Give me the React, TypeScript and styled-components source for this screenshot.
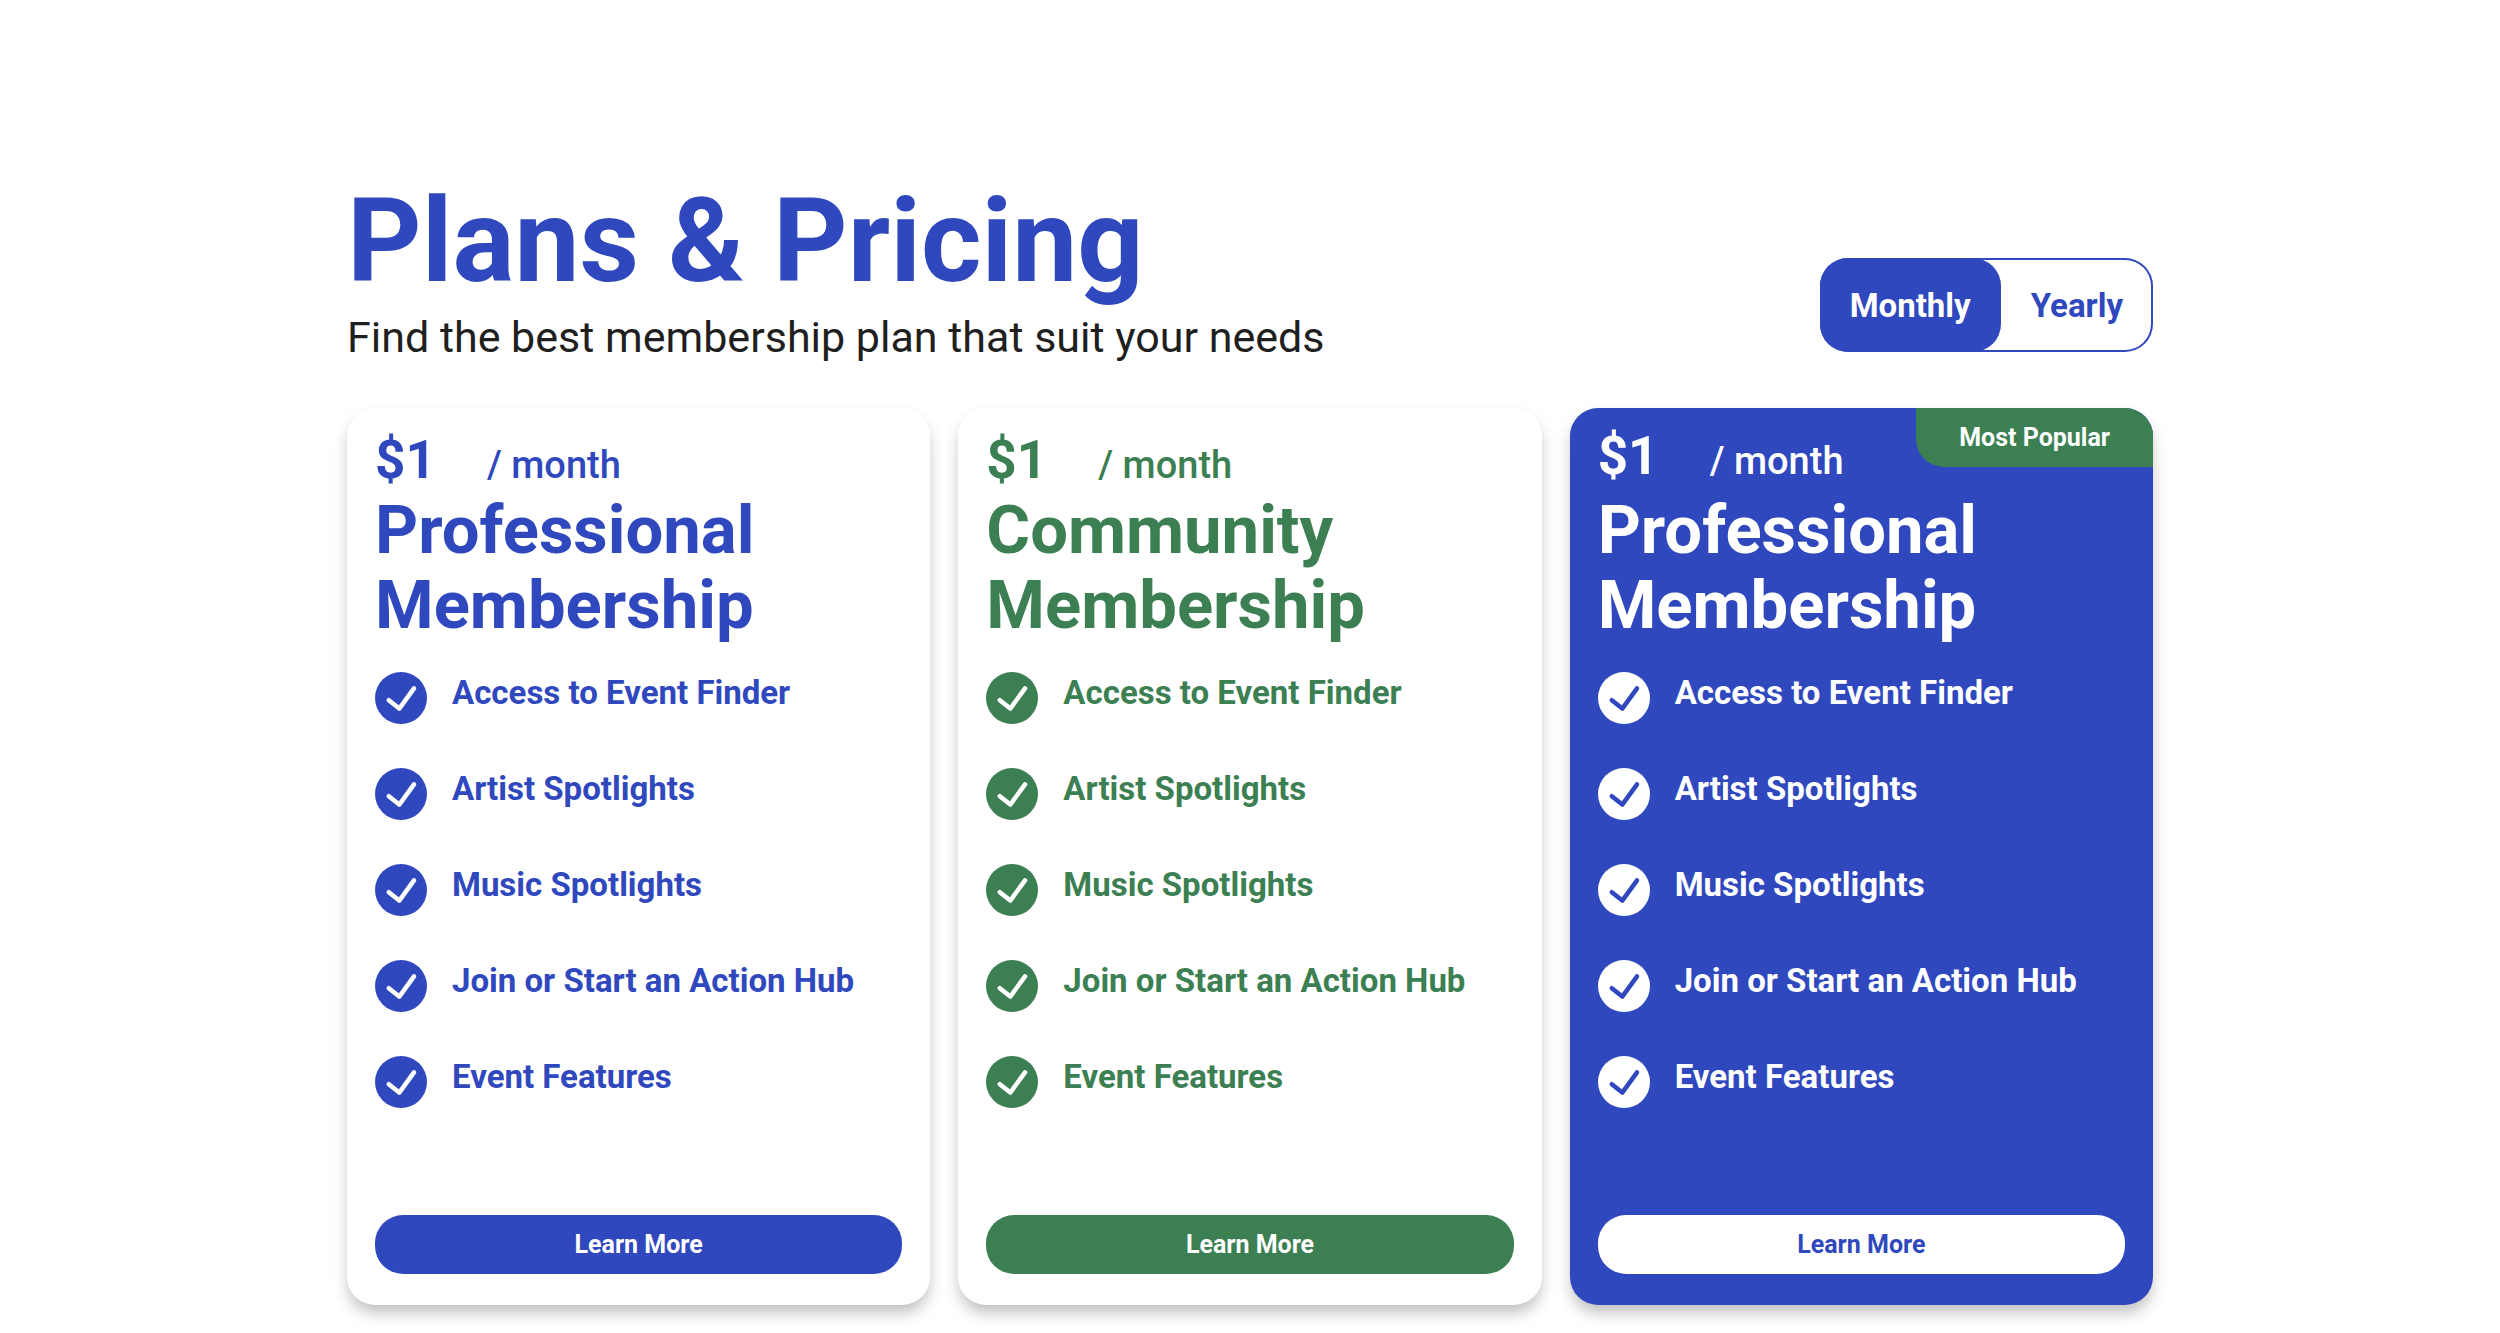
import React, { useState } from "react";
import styled, { createGlobalStyle, css } from "styled-components";

const BLUE = "#2f48be";
const GREEN = "#3b7f52";
const WHITE = "#ffffff";

const GlobalStyle = createGlobalStyle`
  *, *::before, *::after { box-sizing: border-box; }
  body {
    margin: 0;
    background: ${WHITE};
    color: #1f1f1f;
    font-family: Roboto, "Liberation Sans", sans-serif;
  }
`;

const Page = styled.main`
  max-width: 1862px;
  margin: 0 auto;
  padding: 173px 28px 28px;
`;

const Header = styled.header`
  display: flex;
  justify-content: space-between;
  align-items: flex-end;
  gap: 28px;
  margin-bottom: 43px;
`;

const Title = styled.h1`
  margin: 0;
  color: ${BLUE};
  font-size: 116px;
  line-height: 136px;
  font-weight: 700;
`;

const Subtitle = styled.p`
  margin: 0;
  font-size: 43px;
  line-height: 56px;
`;

const Toggle = styled.div`
  display: flex;
  flex-shrink: 0;
  height: 94px;
  margin-bottom: 13px;
  border-radius: 28px;
  box-shadow: inset 0 0 0 2px ${BLUE};
`;

const ToggleButton = styled.button<{ $active: boolean }>`
  padding: 2px 30px 0;
  border: 0;
  border-radius: 28px;
  background: ${(p) => (p.$active ? BLUE : "transparent")};
  color: ${(p) => (p.$active ? WHITE : BLUE)};
  font: 700 33px/42px Roboto, "Liberation Sans", sans-serif;
  cursor: pointer;
`;

const Plans = styled.section`
  display: grid;
  grid-template-columns: repeat(3, minmax(0, 1fr));
  gap: 28px;
`;

const Card = styled.article<{ $background: string; $color: string }>`
  position: relative;
  display: flex;
  flex-direction: column;
  padding: 19px 28px 31px;
  border-radius: 28px;
  background: ${(p) => p.$background};
  color: ${(p) => p.$color};
  box-shadow: 0 9px 16px -2px rgba(0, 0, 0, 0.27);
`;

const Badge = styled.span`
  position: absolute;
  top: 0;
  right: 0;
  padding: 0 43px;
  border-radius: 0 28px 0 28px;
  background: ${GREEN};
  color: ${WHITE};
  font-size: 25px;
  line-height: 59px;
  font-weight: 700;
`;

const Price = styled.p<{ $raised: boolean }>`
  display: flex;
  align-items: baseline;
  margin: 0;
  line-height: 66px;
  ${(p) =>
    p.$raised &&
    css`
      line-height: 58px;
      padding-bottom: 8px;
    `}
`;

const Amount = styled.strong`
  min-width: 112px;
  font-size: 53px;
  font-weight: 700;
`;

const Period = styled.span`
  font-size: 38px;
  line-height: 42px;
  font-weight: 500;
`;

const PlanName = styled.h2`
  margin: 0 0 29px;
  font-size: 67px;
  line-height: 75px;
  font-weight: 700;
`;

const Features = styled.ul`
  display: grid;
  grid-auto-rows: minmax(96px, auto);
  margin: 0 0 63px;
  padding: 0;
  list-style: none;
`;

const Feature = styled.li`
  display: flex;
  align-items: flex-start;
  gap: 25px;
  font-size: 33px;
  line-height: 42px;
  font-weight: 700;
`;

const Check = styled.svg`
  flex: none;
  width: 52px;
  height: 52px;
`;

const LearnMore = styled.button<{ $background: string; $color: string }>`
  height: 59px;
  margin-top: auto;
  border: 0;
  border-radius: 28px;
  background: ${(p) => p.$background};
  color: ${(p) => p.$color};
  font: 700 25px/30px Roboto, "Liberation Sans", sans-serif;
  cursor: pointer;
`;

type Plan = { id: string; name: [string, string]; color: string; popular?: boolean };

const plans: Plan[] = [
  { id: "professional", name: ["Professional", "Membership"], color: BLUE },
  { id: "community", name: ["Community", "Membership"], color: GREEN },
  { id: "professional-popular", name: ["Professional", "Membership"], color: BLUE, popular: true },
];

const features = [
  "Access to Event Finder",
  "Artist Spotlights",
  "Music Spotlights",
  "Join or Start an Action Hub",
  "Event Features",
];

function PlanCard({ name, color, popular = false }: Plan) {
  const background = popular ? color : WHITE;
  const foreground = popular ? WHITE : color;
  return (
    <Card $background={background} $color={foreground}>
      {popular && <Badge>Most Popular</Badge>}
      <Price $raised={popular}>
        <Amount>$1</Amount>
        <Period>/ month</Period>
      </Price>
      <PlanName>
        {name[0]}
        <br />
        {name[1]}
      </PlanName>
      <Features>
        {features.map((label) => (
          <Feature key={label}>
            <Check viewBox="0 0 52 52" aria-hidden="true">
              <circle cx="26" cy="26" r="26" fill={foreground} />
              <path
                d="M13.8 28.2 24.3 36.6 39 16.4"
                fill="none"
                stroke={background}
                strokeWidth="4.5"
                strokeLinecap="round"
                strokeLinejoin="round"
              />
            </Check>
            {label}
          </Feature>
        ))}
      </Features>
      <LearnMore type="button" $background={foreground} $color={background}>
        Learn More
      </LearnMore>
    </Card>
  );
}

export default function App() {
  const [billing, setBilling] = useState("Monthly");
  return (
    <>
      <GlobalStyle />
      <Page>
        <Header>
          <div>
            <Title>Plans &amp; Pricing</Title>
            <Subtitle>Find the best membership plan that suit your needs</Subtitle>
          </div>
          <Toggle role="group" aria-label="Billing period">
            {["Monthly", "Yearly"].map((option) => (
              <ToggleButton
                key={option}
                type="button"
                $active={billing === option}
                aria-pressed={billing === option}
                onClick={() => setBilling(option)}
              >
                {option}
              </ToggleButton>
            ))}
          </Toggle>
        </Header>
        <Plans>
          {plans.map((plan) => (
            <PlanCard key={plan.id} {...plan} />
          ))}
        </Plans>
      </Page>
    </>
  );
}
